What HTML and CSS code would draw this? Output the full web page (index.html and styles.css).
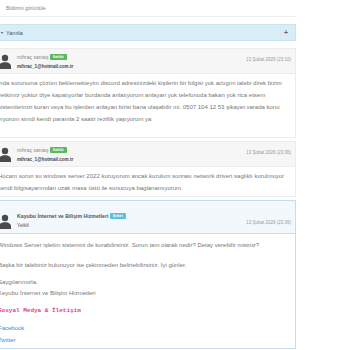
FILE: index.html
```html
<!DOCTYPE html>
<html lang="tr">
<head>
    <meta charset="UTF-8">
    <title>Destek Talebi</title>
    <link rel="stylesheet" href="styles.css">
</head>
<body>
<div class="page">
    <div class="notice">
        <a href="#">Bildirimi görüntüle</a>
    </div>
    <div class="reply-bar">
        <span class="caret">&#9662;</span>
        <span class="reply-title">Yanıtla</span>
        <span class="plus">+</span>
    </div>

    <!-- müşteri mesajı 1 -->
    <div class="msg">
        <div class="msg-head">
            <svg class="avatar" viewBox="0 0 12 15"><circle cx="6" cy="4" r="3.2"/><path d="M0 15v-2.5C0 9.8 2.2 8.2 6 8.2s6 1.6 6 4.3V15z"/></svg>
            <div class="who">
                <div class="name">mihraç sarıtaş <span class="badge owner">Sahibi</span></div>
                <div class="mail">mihrac_1@hotmail.com.tr</div>
            </div>
            <div class="date">13 Şubat 2026 (23:10)</div>
        </div>
        <div class="msg-body tall">
            <p>yıda sorunuma çözüm beklemekteyim discord adresinizdeki kişilerin bir bilgisi yok actıgım talebi direk bizim<br>
            yetkimiz yoktur diye kapatıyorlar burdanda anlatıyorum anlayan yok telefonoda bakan yok rica etsem<br>
            sistemlerinizi kuran veya bu işlerden anlayan birisi bana ulaşabilir mi. 0507 104 12 53 şikayet varada konu<br>
            yıyorum simdi kendi paramla 2 saatir rezillik yaşıyorum ya</p>
        </div>
    </div>

    <!-- müşteri mesajı 2 -->
    <div class="msg">
        <div class="msg-head">
            <svg class="avatar" viewBox="0 0 12 15"><circle cx="6" cy="4" r="3.2"/><path d="M0 15v-2.5C0 9.8 2.2 8.2 6 8.2s6 1.6 6 4.3V15z"/></svg>
            <div class="who">
                <div class="name">mihraç sarıtaş <span class="badge owner">Sahibi</span></div>
                <div class="mail">mihrac_1@hotmail.com.tr</div>
            </div>
            <div class="date">13 Şubat 2026 (23:36)</div>
        </div>
        <div class="msg-body">
            <p>Hocam sorun su windows server 2022 kuruyorum ancak kurulum sonrası network driveri saglıklı kurulmuyor<br>
            kendi bilgisayarımdan uzak masa üstü ile sunucuya baglanamıyorum.</p>
        </div>
    </div>

    <!-- yetkili cevabı -->
    <div class="msg staff">
        <div class="msg-head">
            <svg class="avatar" viewBox="0 0 12 15"><circle cx="6" cy="4" r="3.2"/><path d="M0 15v-2.5C0 9.8 2.2 8.2 6 8.2s6 1.6 6 4.3V15z"/></svg>
            <div class="who">
                <div class="name">Kayubu İnternet ve Bilişim Hizmetleri <span class="badge operator">Şirket</span></div>
                <div class="role">Yetkili</div>
            </div>
            <div class="date">13 Şubat 2026 (23:36)</div>
        </div>
        <div class="msg-body">
            <p>Windows Server işletim sistemini de kurabilirsiniz. Sorun tam olarak nedir? Detay verebilir misiniz?</p>
            <p>Başka bir talebiniz bulunuyor ise çekinmeden belirtebilirsiniz. İyi günler.</p>
            <p class="sign">Saygılarımızla,<br>Keyubu İnternet ve Bilişim Hizmetleri</p>
            <h4 class="social">Sosyal Medya &amp; İletişim</h4>
            <ul class="links">
                <li><a href="#">Facebook</a></li>
                <li><a href="#">Twitter</a></li>
            </ul>
        </div>
    </div>
</div>
</body>
</html>
```

FILE: styles.css
```css
*{
    margin: 0;
    padding: 0;
    box-sizing: border-box;
}
body{
    background: #fff;
    font-family: "Liberation Sans", Arial, sans-serif;
    color: #777;
}
.page{
    width: 316px;
    margin-left: -20px;
}
a{
    text-decoration: none;
}
.notice{
    height: 17px;
    padding: 5px 0 0 26px;
    border-bottom: 1px solid #ececec;
    font-size: 5px;
}
.notice a{
    color: #888;
}
.reply-bar{
    display: flex;
    align-items: center;
    height: 17px;
    margin-top: 7px;
    padding: 0 7px 0 20px;
    background: #d9edf7;
    border: 1px solid #c9e3f0;
    font-size: 5.5px;
    color: #3a5566;
}
.reply-bar .caret{
    font-size: 4px;
    margin-right: 3px;
}
.reply-bar .reply-title{
    flex: 1;
}
.reply-bar .plus{
    font-size: 7px;
    font-weight: bold;
    color: #667;
}
.msg{
    margin-top: 7px;
    border: 1px solid #ececec;
}
.msg + .msg{
    margin-top: 3px;
}
.msg-head{
    display: flex;
    align-items: flex-start;
    padding: 3px 4px 1px 18px;
    background: #f6f6f6;
    border-bottom: 1px solid #ececec;
}
.avatar{
    width: 12px;
    height: 15px;
    margin-top: 2px;
    margin-right: 6px;
    fill: #4a4a4a;
}
.who{
    flex: 1;
    line-height: 10px;
}
.name{
    font-size: 5px;
    color: #888;
}
.mail{
    font-size: 4.6px;
    font-weight: bold;
    color: #444;
}
.role{
    font-size: 4.6px;
    color: #555;
}
.badge{
    display: inline-block;
    padding: 0 3px;
    line-height: 6px;
    border-radius: 1px;
    font-size: 3.6px;
    font-weight: bold;
    color: #fff;
    vertical-align: 1px;
}
.badge.owner{
    background: #5cb85c;
}
.badge.operator{
    background: #5bc0de;
}
.date{
    margin-top: 5px;
    font-size: 4.5px;
    color: #999;
}
.msg-body{
    padding: 3px 0 2px 17px;
    background: #fff;
    font-size: 6px;
    line-height: 12px;
    color: #777;
}
.msg-body.tall{
    padding-bottom: 12px;
}
.msg-body p{
    white-space: nowrap;
}
.msg.staff{
    border-color: #c3dcf1;
}
.msg.staff .msg-head{
    padding-top: 10px;
    padding-bottom: 2px;
    background: #f3f8fc;
    border-bottom-color: #c3dcf1;
}
.msg.staff .avatar{
    margin-top: 3px;
}
.msg.staff .name{
    font-size: 5.2px;
    font-weight: bold;
    color: #555;
}
.msg.staff .date{
    margin-top: 9px;
}
.msg.staff .msg-body{
    padding-top: 5px;
}
.msg-body p + p{
    margin-top: 8px;
}
.msg-body .sign{
    margin-top: 6px;
    line-height: 11px;
}
.social{
    margin-top: 6px;
    font-family: "Liberation Mono", monospace;
    font-size: 6px;
    font-weight: bold;
    line-height: 12px;
    color: #e83e8c;
}
.links{
    list-style: none;
    margin-top: 6px;
}
.links li{
    line-height: 11.5px;
}
.links a{
    color: #4a86d6;
}
```
